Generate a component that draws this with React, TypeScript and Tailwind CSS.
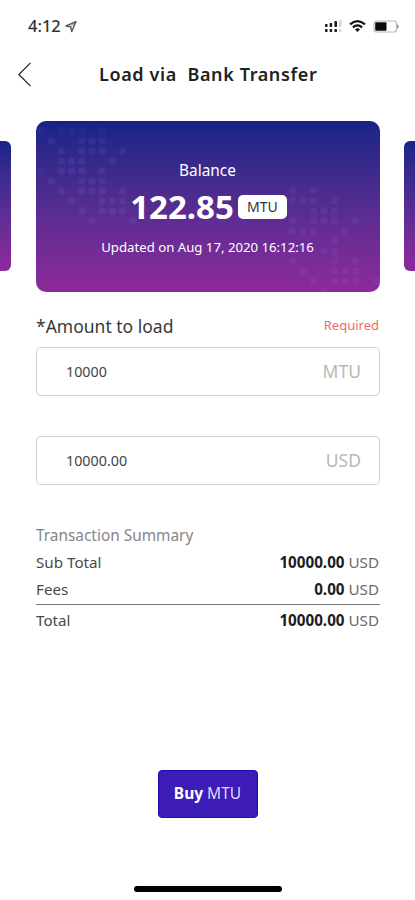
import React from "react";

const leftDots: [number, number][] = [
  [0, 0], [2, 0], [3, 0], [4, 0], [6, 0], [1, 1], [4, 1], [5, 1], [6, 1],
  [2, 2], [4, 2], [5, 2], [6, 2], [8, 2], [2, 3], [3, 3], [4, 3], [7, 3],
  [0, 4], [2, 4], [3, 4], [4, 4], [6, 4], [1, 5], [4, 5], [5, 5], [6, 5],
  [2, 6], [4, 6], [5, 6], [6, 6], [8, 6], [3, 7], [6, 7], [7, 7], [8, 7],
  [4, 8], [6, 8], [7, 8], [8, 8], [5, 9], [9, 9],
];

const rightDots: [number, number][] = [
  [0, 0], [2, 0], [0, 1], [1, 1], [2, 1], [4, 1], [2, 2], [3, 2], [4, 2],
  [0, 3], [2, 3], [3, 3], [4, 3], [6, 3], [0, 4], [1, 4], [2, 4], [5, 4],
  [4, 5], [0, 6], [3, 6], [4, 6], [0, 7], [4, 7], [6, 7], [1, 8], [4, 8],
  [5, 8], [6, 8], [2, 9], [4, 9], [5, 9], [6, 9], [8, 9], [3, 10],
];

function CardPattern() {
  return (
    <svg className="absolute inset-0" width="344" height="171" viewBox="0 0 344 171" fill="#a49cff">
      {leftDots.map(([c, r]) => (
        <rect key={`l${c}-${r}`} x={1.5 + c * 10.2} y={6.5 + r * 10} width="7" height="7" rx="2" opacity={c === 0 || r === 0 ? 0.05 : 0.09} />
      ))}
      {rightDots.map(([c, r]) => (
        <rect key={`r${c}-${r}`} x={253 + c * 10.5} y={66 + r * 10.1} width="7" height="7" rx="2" opacity="0.08" />
      ))}
    </svg>
  );
}

function StatusBar() {
  return (
    <div className="flex h-[52px] items-center justify-between pl-[28px] pr-[15px]">
      <div className="flex items-center gap-[4px]">
        <span className="text-[16.5px] leading-[20px] font-medium text-[#333]">4:12</span>
        <svg width="12" height="13" viewBox="0 0 12 13" fill="none" stroke="#555" strokeWidth="1.4" strokeLinejoin="round">
          <path d="M11 1.6 L1 6 L5.6 6.8 L6.8 11.6 Z" />
          <path d="M11 1.6 L5.6 6.8" strokeWidth=".8" />
        </svg>
      </div>
      <div className="flex items-center">
        <svg width="18" height="14" viewBox="0 0 18 14" fill="#1b1b1b">
          <rect x="1" y="5" width="2.6" height="3" rx=".7" />
          <rect x="5.6" y="4" width="2.6" height="4" rx=".7" />
          <rect x="10.4" y="2" width="2.6" height="6" rx=".7" />
          <rect x="15" y="1" width="2.4" height="7" rx=".7" fill="#d5d5d5" />
          <rect x="1" y="10" width="2.6" height="3" rx=".7" />
          <rect x="5.6" y="10" width="2.6" height="3" rx=".7" />
          <rect x="10.4" y="10" width="2.6" height="3" rx=".7" />
          <rect x="15" y="10" width="2.4" height="3" rx=".7" fill="#d5d5d5" />
        </svg>
        <svg className="ml-[7px]" width="17" height="14" viewBox="0 0 17 14" fill="none" stroke="#111" strokeWidth="2.1">
          <path d="M1 5.4 Q8.5 -1.2 16 5.4" />
          <path d="M3.9 8.4 Q8.5 4.3 13.1 8.4" />
          <path d="M6 10.2 Q8.5 8.3 11 10.2 L8.5 12.9 Z" fill="#111" stroke="none" />
        </svg>
        <svg className="ml-[7px]" width="27" height="13" viewBox="0 0 27 13">
          <rect x="1" y="1" width="22.5" height="11" rx="2.6" fill="#fff" stroke="#b8b8b8" strokeWidth="1.2" />
          <rect x="2.2" y="2.2" width="11.3" height="8.6" rx="1" fill="#0c0c0c" />
          <path d="M24 4 L26.3 6.5 L24 9 Z" fill="#999" />
        </svg>
      </div>
    </div>
  );
}

function SummaryRow({ label, amount }: { label: string; amount: string }) {
  return (
    <div className="flex h-[27px] items-center justify-between text-[15.2px] leading-[20px]">
      <span className="text-[#4a4a4a]">{label}</span>
      <span className="pr-[1px] text-[#6a6a6a]">
        <b className="font-bold text-[#1c1c1c]">{amount}</b> USD
      </span>
    </div>
  );
}

function AmountField({ value, unit }: { value: string; unit: string }) {
  return (
    <div className="flex h-[49px] items-center justify-between rounded-[5px] border border-[#cfcfcf] pl-[29px] pr-[18px]">
      <span className="text-[14.3px] text-[#444]">{value}</span>
      <span className="text-[17.5px] text-[#b8b8b8]">{unit}</span>
    </div>
  );
}

export default function App() {
  return (
    <div className="flex h-[900px] w-[415px] flex-col overflow-hidden bg-white font-['Noto_Sans','Open_Sans',sans-serif]">
      <StatusBar />
      <header className="flex h-[44px] items-center pl-[18px]">
        <svg width="14" height="25" viewBox="0 0 14 25" fill="none" stroke="#222" strokeWidth="1.2">
          <path d="M12.5 .8 L.9 12.5 L12.5 24.2" />
        </svg>
        <h1 className="ml-[67px] text-[18px] font-semibold tracking-[0.62px] whitespace-pre text-[#222]">Load via  Bank Transfer</h1>
      </header>
      <div className="mt-[24.5px] flex h-[171px] shrink-0 items-center justify-between">
        <div className="h-[130px] w-[11px] rounded-r-[6px] bg-linear-to-b from-[#16248a] to-[#8f289b]" />
        <section className="relative flex h-[171px] w-[344px] flex-col items-center overflow-hidden rounded-[10px] bg-linear-to-b from-[#152386] to-[#8e289b] pt-[39px] text-white">
          <CardPattern />
          <span className="relative text-[15.4px] leading-[22px]">Balance</span>
          <div className="relative mt-[5px] ml-[2px] flex h-[40px] items-center gap-[4px]">
            <span className="text-[33px] leading-[40px] font-bold">122.85</span>
            <span className="flex h-[24px] w-[49px] items-center justify-center rounded-[5px] bg-white text-[14px] text-[#333]">MTU</span>
          </div>
          <span className="relative mt-[10px] text-[13.2px] leading-[20px]">Updated on Aug 17, 2020 16:12:16</span>
        </section>
        <div className="h-[130px] w-[11px] rounded-l-[6px] bg-linear-to-b from-[#16248a] to-[#8f289b]" />
      </div>
      <main className="flex flex-col pr-[35px] pl-[36px]">
        <div className="mt-[21.5px] flex h-[26px] items-center justify-between">
          <label className="text-[17.5px] text-[#383838]">*Amount to load</label>
          <span className="pr-[1px] text-[13px] text-[#ef6a68]">Required</span>
        </div>
        <div className="mt-[8px] flex flex-col gap-[40px]">
          <AmountField value="10000" unit="MTU" />
          <AmountField value="10000.00" unit="USD" />
        </div>
        <section className="mt-[39px]">
          <h2 className="flex h-[24px] items-center text-[15.4px] text-[#858585]">Transaction Summary</h2>
          <SummaryRow label="Sub Total" amount="10000.00" />
          <SummaryRow label="Fees" amount="0.00" />
          <div className="mt-[2px] border-t border-[#777] pt-[1px]">
            <SummaryRow label="Total" amount="10000.00" />
          </div>
        </section>
      </main>
      <button className="mt-[137px] h-[48px] w-[100px] shrink-0 self-center rounded-[4px] border border-[#2207a8] bg-[#3d1cb8] text-[15.5px] text-[#ded6ff]">
        <b className="font-bold text-white">Buy</b> MTU
      </button>
      <div className="mt-auto mb-[8px] h-[6px] w-[148px] shrink-0 self-center rounded-full bg-black" />
    </div>
  );
}
